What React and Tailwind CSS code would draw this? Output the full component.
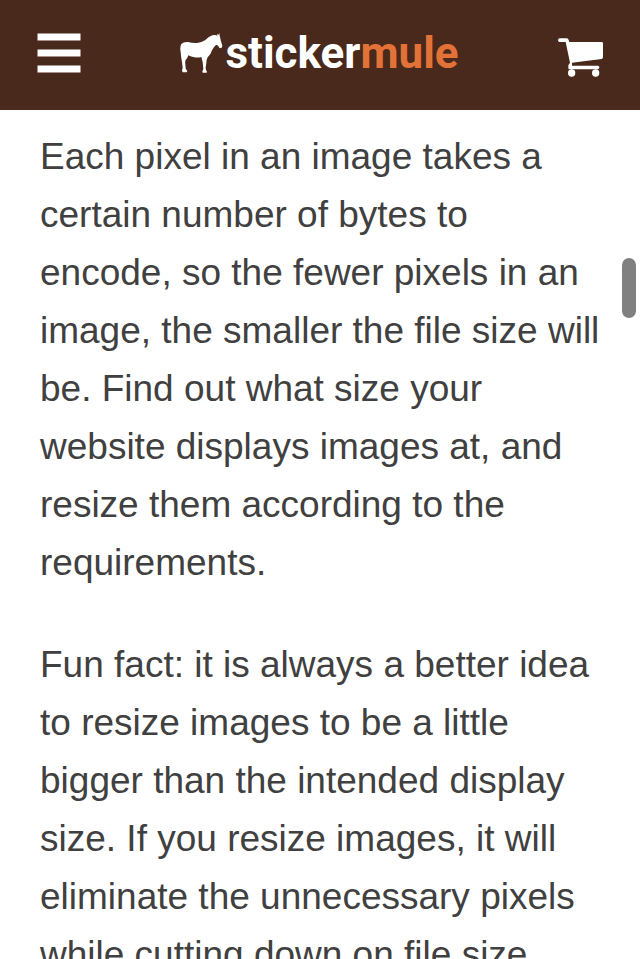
function MenuIcon() {
  return (
    <svg viewBox="0 0 44 40" className="h-10 w-11" fill="#fff" aria-hidden="true">
      <path d="M.5 .5h43v7H.5zM.5 16.5h43v7H.5zM.5 32.5h43v7H.5z" />
    </svg>
  );
}

function MuleIcon() {
  return (
    <svg viewBox="0 0 129 120" className="h-10 w-[43px]" fill="#fff" aria-hidden="true">
      <path d="M112 8L111 2L115 6L118 0L119 8Q121 13 122 21L127 38Q127 45 122 46Q117 46 115 39Q111 35 107 37Q101 42 96 52Q93 64 83 73Q79 80 79 90L77 104Q77 111 81 116L80 119H68L67 115L70 108L68 88L64 72Q54 75 43 73Q33 71 25 67Q23 75 17 81Q15 86 16 93L17 107Q21 111 22 115L20 118H8L6 113L8 104L6 88Q3 73 2 58Q-1 42 4 33Q11 26 24 27Q37 31 51 30Q65 29 75 22Q87 10 97 7Q106 4 112 8Z" />
    </svg>
  );
}

function CartIcon() {
  return (
    <svg viewBox="0 0 135 117" className="h-[39px] w-[45px]" fill="#fff" aria-hidden="true">
      <path d="M4 1H26Q31 1 32 6L34 12H131Q135 12 135 16V58Q135 62 131 63L42 74V83H120Q124 84 124 88T120 94H34Q31 94 31 90V82L36 74L23 12H4Q0 11 0 7T4 1Z" />
      <circle cx="41" cy="105" r="11" />
      <circle cx="113" cy="105" r="11" />
    </svg>
  );
}

const paragraphs = [
  "Each pixel in an image takes a certain number of bytes to encode, so the fewer pixels in an image, the smaller the file size will be. Find out what size your website displays images at, and resize them according to the requirements.",
  "Fun fact: it is always a better idea to resize images to be a little bigger than the intended display size. If you resize images, it will eliminate the unnecessary pixels while cutting down on file size.",
];

export default function App() {
  return (
    <div className="relative flex h-screen flex-col overflow-hidden bg-white font-['Liberation_Sans',Arial,sans-serif] text-[#404040]">
      <header className="flex h-[110px] shrink-0 items-center justify-between bg-[#48291b] px-[37px] pb-1">
        <button type="button" aria-label="Menu">
          <MenuIcon />
        </button>
        <a href="#" className="flex items-center gap-0.5 font-['Roboto',sans-serif] text-[44px] leading-none font-bold text-white">
          <MuleIcon />
          <span>
            sticker<span className="text-[#e37239]">mule</span>
          </span>
        </a>
        <button type="button" aria-label="Cart" className="pt-2">
          <CartIcon />
        </button>
      </header>
      <main className="flex min-h-0 flex-1 flex-col gap-11 px-10 pt-[18px] text-[37px] leading-[58px]">
        {paragraphs.map((text) => (
          <p key={text}>{text}</p>
        ))}
      </main>
      <div className="absolute top-[258px] right-1 h-[60px] w-3.5 rounded-full bg-[#808080]" />
    </div>
  );
}
